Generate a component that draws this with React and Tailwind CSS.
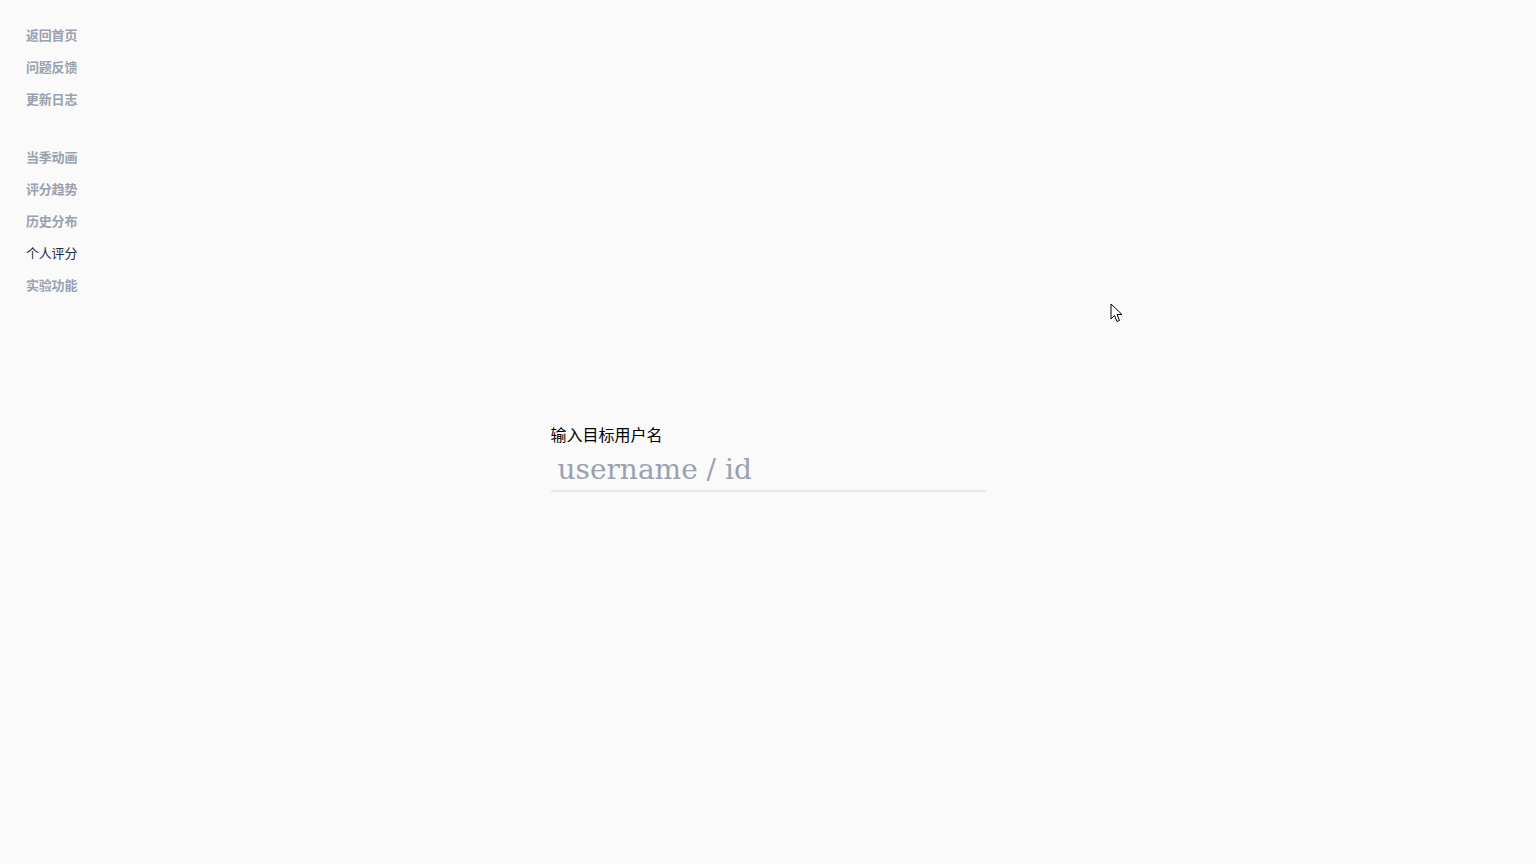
import React from 'react';

const topLinks = ['返回首页', '问题反馈', '更新日志'];
const navLinks = [
  { label: '当季动画' },
  { label: '评分趋势' },
  { label: '历史分布' },
  { label: '个人评分', active: true },
  { label: '实验功能' },
];

function SideNav() {
  const item = (link) => (
    <a
      key={link.label}
      href="#"
      className={
        'block h-8 leading-8 text-[13px] tracking-[-0.2px] ' +
        (link.active ? 'text-gray-800 font-normal' : 'text-gray-400 font-semibold')
      }
    >
      {link.label}
    </a>
  );

  return (
    <nav className="w-[120px] shrink-0 pl-[26px] pt-[19px]">
      {topLinks.map((label) => item({ label }))}
      <div className="h-[26px]" />
      {navLinks.map(item)}
    </nav>
  );
}

function Cursor() {
  return (
    <svg
      className="absolute left-[1110px] top-[303px]"
      width="14"
      height="21"
      viewBox="0 0 14 21"
    >
      <path
        d="M1 1 L1 16 L4.5 12.5 L7 18.5 L9.5 17.5 L7 11.5 L12 11.5 Z"
        fill="#fff"
        stroke="#000"
        strokeWidth="1"
      />
    </svg>
  );
}

export default function App() {
  return (
    <div
      className="relative flex min-h-[864px] bg-[#fafafa]"
      style={{ fontFamily: '"Noto Sans", "Noto Sans CJK SC", sans-serif' }}
    >
      <SideNav />
      <main className="flex-1 flex justify-center pt-[425px] pr-[120px]">
        <div className="w-[435px]">
          <label className="block text-[16px] leading-5 text-black">输入目标用户名</label>
          <input
            type="text"
            placeholder="username / id"
            className="mt-[4px] w-full h-[43px] px-[7px] bg-transparent border-b-2 border-gray-200 outline-none text-[28px] text-gray-700 placeholder:text-gray-400"
            style={{ fontFamily: '"DejaVu Serif", serif' }}
          />
        </div>
      </main>
      <Cursor />
    </div>
  );
}
